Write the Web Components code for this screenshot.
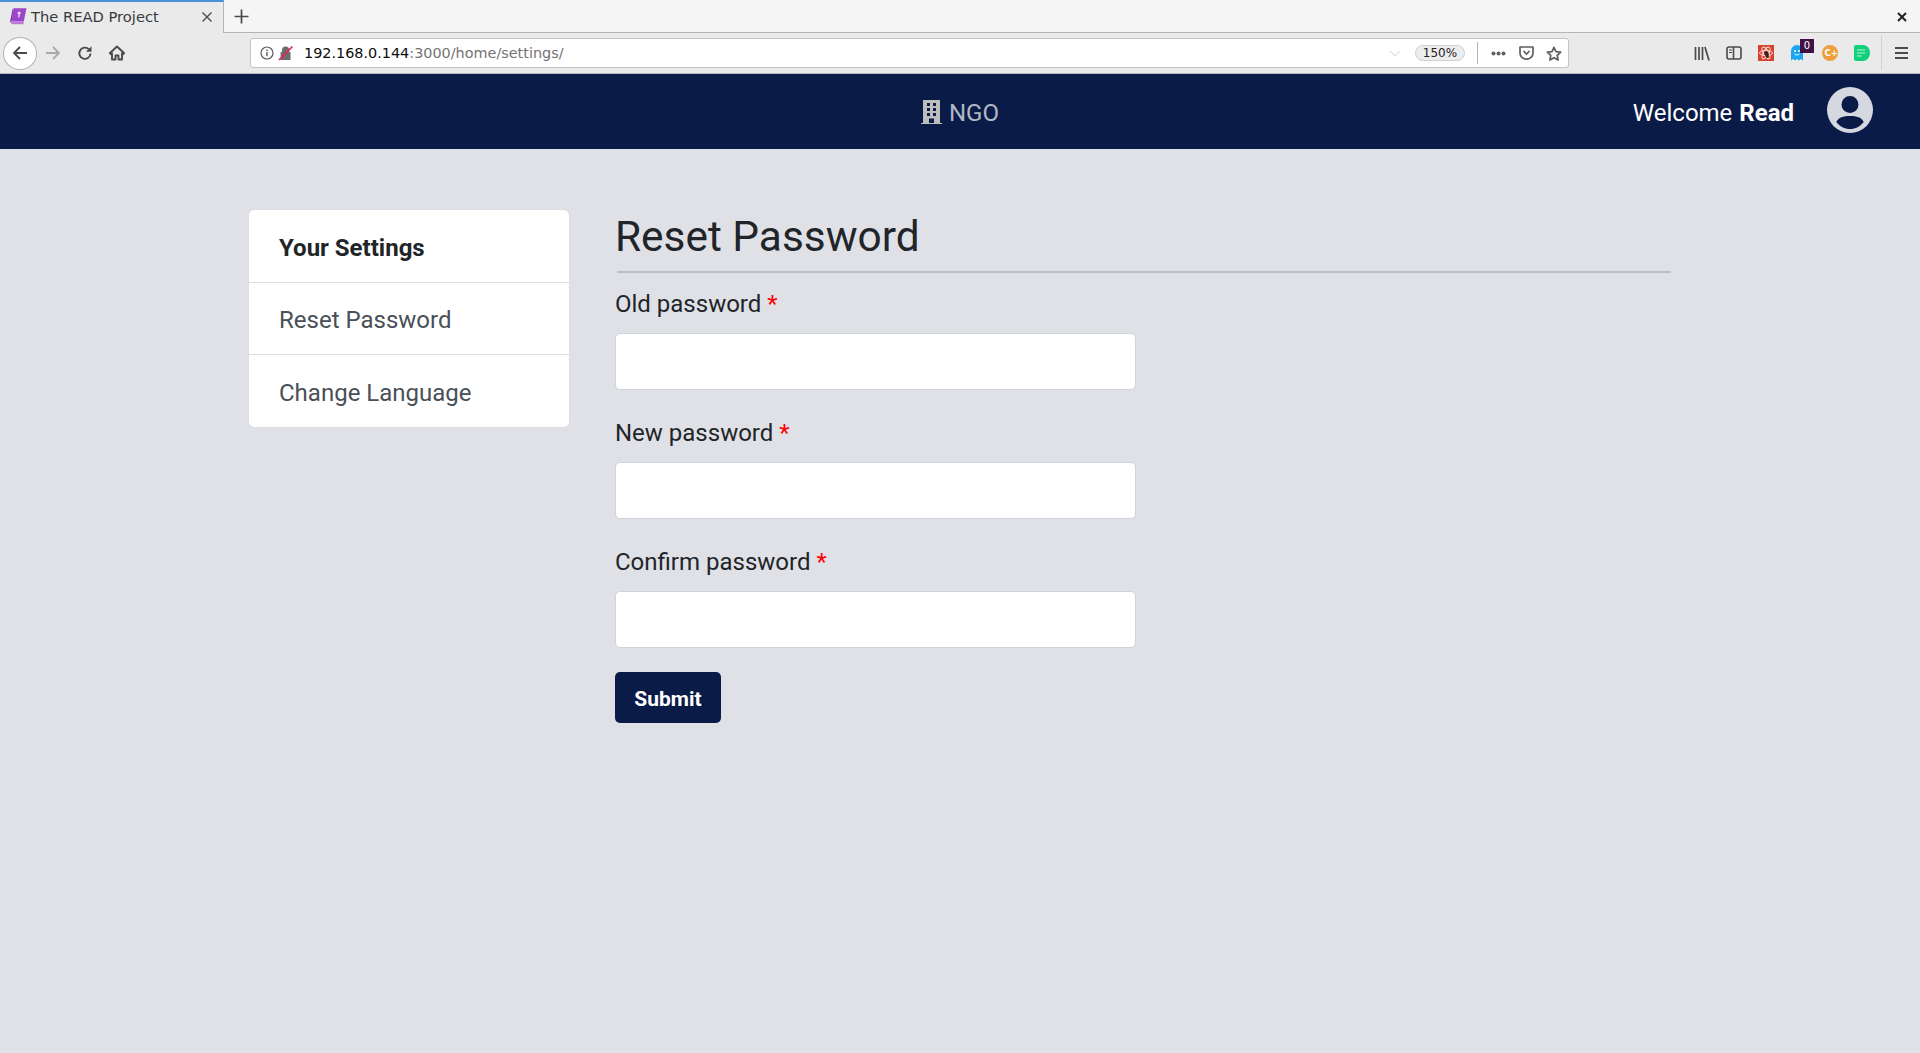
<!DOCTYPE html>
<html>
<head>
<meta charset="utf-8">
<title>The READ Project</title>
<style>
  html, body { margin: 0; height: 100%; overflow: hidden; background: #e0e1e6; }
  body { display: flex; flex-direction: column; font-family: Roboto, "Liberation Sans", sans-serif; }
</style>
</head>
<body>
<browser-chrome tab-title="The READ Project" host-part="192.168.0.144" path-part=":3000/home/settings/" zoom="150%"></browser-chrome>
<app-navbar org="NGO" user="Read"></app-navbar>
<settings-page>
  <settings-menu slot="menu" heading="Your Settings">
    <menu-link>Reset Password</menu-link>
    <menu-link>Change Language</menu-link>
  </settings-menu>
  <reset-form heading="Reset Password">
    <password-field label="Old password"></password-field>
    <password-field label="New password"></password-field>
    <password-field label="Confirm password"></password-field>
  </reset-form>
</settings-page>

<script>
class BrowserChrome extends HTMLElement {
  constructor() {
    super();
    this.attachShadow({ mode: "open" });
    const ico = "#4a4a4f";
    this.shadowRoot.innerHTML = `
      <style>
        :host { display: block; font-family: "DejaVu Sans", sans-serif; color: #38383d; flex: none; }
        svg { display: block; }
        .tabs { height: 32px; background: #f5f5f5; border-bottom: 1px solid #b4b4b4; display: flex; align-items: stretch; }
        .tab { width: 224px; height: 33px; box-sizing: border-box; background: #eaeaea; border-top: 2px solid #4a90d9; border-right: 1px solid #b4b4b4; display: flex; align-items: center; padding: 0 10px 2px 9px; font-size: 14.7px; }
        .tab span { margin-left: 4px; flex: 1; white-space: nowrap; }
        .newtab { width: 34px; display: flex; align-items: center; justify-content: center; }
        .grow { flex: 1; }
        .winclose { width: 36px; padding-top: 2px; display: flex; align-items: center; justify-content: center; }
        .bar { height: 40px; background: #eaeaea; border-bottom: 1px solid #b9b9b9; display: flex; align-items: center; box-sizing: content-box; }
        .nav { width: 250px; flex: none; display: flex; align-items: center; padding-left: 3px; box-sizing: border-box; }
        .back { width: 34px; height: 33px; box-sizing: border-box; border: 1px solid #b1b1b3; border-radius: 50%; background: #fff; display: flex; align-items: center; justify-content: center; }
        .nav .btn { width: 32px; display: flex; justify-content: center; }
        .url { width: 1319px; height: 30px; flex: none; box-sizing: border-box; background: #fff; border: 1px solid #c4c4c4; border-radius: 3px; display: flex; align-items: center; padding-left: 9px; font-size: 14.4px; white-space: nowrap; }
        .url .host { color: #0c0c0d; margin-left: 10px; }
        .url .path { color: #737373; flex: 1; }
        .chev { margin-right: 14px; }
        .pill { width: 50px; height: 16px; box-sizing: border-box; border: 1px solid #cfcfcf; border-radius: 8px; background: #ededed; font-size: 12px; line-height: 14px; text-align: center; color: #222; margin-right: 12px; }
        .sep { width: 1px; height: 22px; background: #b5b5b5; }
        .page-actions { display: flex; align-items: center; margin-left: 6px; }
        .page-actions div { width: 28px; display: flex; justify-content: center; }
        .tools { display: flex; align-items: center; margin-left: 117px; }
        .tool { width: 32px; display: flex; justify-content: center; position: relative; }
        .badge { position: absolute; left: 18px; top: -6px; width: 14px; height: 14px; background: #3f1145; color: #fff; font-size: 10px; line-height: 14px; text-align: center; }
        .tsep { width: 1px; height: 34px; background: #d2d2d2; margin: 0 11px 0 3px; }
      </style>
      <div class="tabs">
        <div class="tab">
          <svg width="18" height="17" viewBox="0 0 17 16"><path d="M4.500.3h12L14 12.500H2.500z" fill="#9b45c9"/><path d="M2.500 12.500H14l-.4 2.800H3.500C1.800 15.300 1.500 13.500 2.500 12.500z" fill="#b878dc"/><path d="M.8 14 3.300 1.500 4.500.3 2.500 12.500z" fill="#7a2ea6"/><circle cx="9.600" cy="4.800" r="1.500" fill="#ecdcf5"/><path d="M8.900 6h1.300l-.3 2.800H8.500z" fill="#ecdcf5"/></svg>
          <span>${this.getAttribute("tab-title")}</span>
          <svg width="12" height="12" viewBox="0 0 12 12"><path d="M1.500 1.500l9 9M10.500 1.500l-9 9" stroke="${ico}" stroke-width="1.400"/></svg>
        </div>
        <div class="newtab"><svg width="15" height="15" viewBox="0 0 15 15"><path d="M7.500 .5v14M.5 7.500h14" stroke="${ico}" stroke-width="1.700"/></svg></div>
        <div class="grow"></div>
        <div class="winclose"><svg width="10" height="10" viewBox="0 0 10 10"><path d="M1 1l8 8M9 1L1 9" stroke="#222" stroke-width="2"/></svg></div>
      </div>
      <div class="bar">
        <div class="nav">
          <div class="back"><svg width="16" height="16" viewBox="0 0 16 16"><path d="M15 8H2M8 2 2 8l6 6" fill="none" stroke="${ico}" stroke-width="1.800"/></svg></div>
          <div class="btn"><svg width="16" height="16" viewBox="0 0 16 16"><path d="M1 8h13M8 2l6 6-6 6" fill="none" stroke="#a9a9ab" stroke-width="1.800"/></svg></div>
          <div class="btn"><svg width="16" height="16" viewBox="0 0 16 16"><path d="M13.500 8.500a5.600 5.600 0 1 1-1.700-4.300" fill="none" stroke="${ico}" stroke-width="1.900"/><path d="M14.500 1.200v5.600H9z" fill="${ico}"/></svg></div>
          <div class="btn"><svg width="16" height="16" viewBox="0 0 16 16"><path d="M8 1.500.8 8.200l1 1L3 8.200V14.500h3.500v-4h3v4H13V8.200l1.200 1 1-1z" fill="none" stroke="${ico}" stroke-width="1.900" stroke-linejoin="round"/></svg></div>
        </div>
        <div class="url">
          <svg width="14" height="14" viewBox="0 0 14 14"><circle cx="7" cy="7" r="6" fill="none" stroke="#5a5a5f" stroke-width="1.200"/><path d="M7 6v4.200M7 3.500v1.400" stroke="#5a5a5f" stroke-width="1.400"/></svg>
          <svg width="16" height="16" viewBox="0 0 16 16" style="margin-left:4px"><path d="M4 7V5a3.600 3.600 0 0 1 7.200 0v2h1.300v8H2.600V7z" fill="#6d6d70"/><path d="M1 15 14.500 1.500" stroke="#e22850" stroke-width="1.700"/></svg>
          <span class="host">${this.getAttribute("host-part")}</span><span class="path">${this.getAttribute("path-part")}</span>
          <svg class="chev" width="12" height="7" viewBox="0 0 12 7"><path d="M1 1l5 5 5-5" fill="none" stroke="#e3e3e3" stroke-width="1.300"/></svg>
          <div class="pill">${this.getAttribute("zoom")}</div>
          <div class="sep"></div>
          <div class="page-actions">
            <div><svg width="15" height="5" viewBox="0 0 15 5"><circle cx="2.500" cy="2.500" r="2" fill="#5f5f62"/><circle cx="7.500" cy="2.500" r="2" fill="#5f5f62"/><circle cx="12.500" cy="2.500" r="2" fill="#5f5f62"/></svg></div>
            <div><svg width="15" height="14" viewBox="0 0 15 14"><path d="M1 1h13v6a6.500 6.200 0 0 1-13 0z" fill="none" stroke="#5f5f62" stroke-width="1.700" stroke-linejoin="round"/><path d="M4.500 5l3 3 3-3" fill="none" stroke="#5f5f62" stroke-width="1.700"/></svg></div>
            <div><svg width="16" height="15" viewBox="0 0 16 15"><path d="M8 1.300l2 4.300 4.700.6-3.500 3.200.9 4.600L8 11.700 3.900 14l.9-4.600L1.300 6.200 6 5.600z" fill="none" stroke="#5f5f62" stroke-width="1.700" stroke-linejoin="round"/></svg></div>
          </div>
        </div>
        <div class="tools">
          <div class="tool"><svg width="16" height="15" viewBox="0 0 16 15"><path d="M1.500 1v13M5 1v13M8.500 1v13M11 1l4 13.500" stroke="${ico}" stroke-width="1.700" fill="none"/></svg></div>
          <div class="tool"><svg width="16" height="14" viewBox="0 0 16 14"><rect x="1" y="1" width="14" height="12" rx="2" fill="none" stroke="${ico}" stroke-width="1.600"/><path d="M7.500 1v12" stroke="${ico}" stroke-width="1.600"/><path d="M3 4h3M3 6.500h3" stroke="${ico}" stroke-width="1.200"/></svg></div>
          <div class="tool"><svg width="16" height="16" viewBox="0 0 16 16"><rect width="16" height="16" fill="#d9412f"/><g fill="none" stroke="#f6d5cf" stroke-width="1"><ellipse cx="8" cy="8" rx="6.500" ry="2.600"/><ellipse cx="8" cy="8" rx="6.500" ry="2.600" transform="rotate(60 8 8)"/><ellipse cx="8" cy="8" rx="6.500" ry="2.600" transform="rotate(120 8 8)"/></g><path d="M6 7l3-1 2 3-1 4-2-.500-1-2.500z" fill="#3a2320"/></svg></div>
          <div class="tool"><svg width="12" height="16" viewBox="0 0 12 16" style="margin-left:-2px"><path d="M0 15.500V6a6 6 0 0 1 12 0v9.500l-2-1.500-2 1.500-2-1.500-2 1.500-2-1.500z" fill="#18a7f0"/><circle cx="4" cy="6" r="1" fill="#fff"/><circle cx="8" cy="6" r="1" fill="#fff"/><path d="M3.500 9c1.500 1.300 3.500 1.300 5 0" stroke="#fff" fill="none"/></svg><div class="badge">0</div></div>
          <div class="tool"><svg width="16" height="16" viewBox="0 0 16 16"><circle cx="8" cy="8" r="8" fill="#ee9f3c"/><text x="2.500" y="11" font-size="8.500" font-weight="700" fill="#fff" font-family="DejaVu Sans">C+</text></svg></div>
          <div class="tool"><svg width="16" height="16" viewBox="0 0 16 16"><path d="M2 0h7a7 8 0 0 1 0 16H2a2 2 0 0 1-2-2V2a2 2 0 0 1 2-2z" fill="#0fd17c"/><path d="M3 5h8M3 8h8M3 11h4.500" stroke="#bff3da" stroke-width="1.200"/></svg></div>
          <div class="tsep"></div>
          <div class="tool" style="width:16px"><svg width="13" height="12" viewBox="0 0 13 12"><path d="M0 1h13M0 6h13M0 11h13" stroke="${ico}" stroke-width="1.800"/></svg></div>
        </div>
      </div>`;
  }
}

class AppNavbar extends HTMLElement {
  constructor() {
    super();
    this.attachShadow({ mode: "open" });
    this.shadowRoot.innerHTML = `
      <style>
        :host { display: grid; grid-template-columns: 1fr auto 1fr; align-items: center; height: 75px; flex: none; background: #0a1b47; padding-right: 47px; padding-left: 47px; font-size: 24px; }
        .org { grid-column: 2; display: flex; align-items: center; color: rgba(255,255,255,.7); gap: 7px; }
        .org span, .user span { padding-top: 2px; }
        .user { grid-column: 3; justify-self: end; display: flex; align-items: center; gap: 33px; color: #fff; word-spacing: 1px; }
        .user svg { margin-top: -3px; }
        b { font-weight: 700; }
        svg { display: block; }
      </style>
      <div class="org">
        <svg width="21" height="24" viewBox="0 0 21 24"><path d="M2 0h17v23h2v1H0v-1h2z" fill="#bdbdbd"/><g fill="#0a1b47"><rect x="6" y="3" width="3" height="3"/><rect x="12" y="3" width="3" height="3"/><rect x="6" y="8" width="3" height="3"/><rect x="12" y="8" width="3" height="3"/><rect x="6" y="13" width="3" height="3"/><rect x="12" y="13" width="3" height="3"/><rect x="8" y="18.500" width="5" height="4.500"/></g></svg>
        <span>${this.getAttribute("org")}</span>
      </div>
      <div class="user">
        <span>Welcome <b>${this.getAttribute("user")}</b></span>
        <svg width="46" height="46" viewBox="0 0 46 46"><circle cx="23" cy="23" r="23" fill="#d5d8e0"/><circle cx="23" cy="17.500" r="8.500" fill="#0a1b47"/><path d="M9.300 35c2-4.500 7-6 13.700-6s11.700 1.500 13.700 6c-3.500 4.500-8.200 7-13.700 7s-10.200-2.500-13.700-7z" fill="#0a1b47"/></svg>
      </div>`;
  }
}

class SettingsPage extends HTMLElement {
  constructor() {
    super();
    this.attachShadow({ mode: "open" });
    this.shadowRoot.innerHTML = `
      <style>
        :host { display: flex; flex: 1; align-items: flex-start; gap: 46px; padding: 61px 0 0 249px; }
        ::slotted([slot="menu"]) { flex: none; }
      </style>
      <slot name="menu"></slot>
      <slot></slot>`;
  }
}

class SettingsMenu extends HTMLElement {
  constructor() {
    super();
    this.attachShadow({ mode: "open" });
    this.shadowRoot.innerHTML = `
      <style>
        :host { display: block; width: 320px; background: #fff; border-radius: 5px; overflow: hidden; box-shadow: 0 0 1px rgba(0,0,0,.12); }
        .head { height: 73px; box-sizing: border-box; padding: 4px 30px 0; display: flex; align-items: center; font-size: 24px; font-weight: 700; color: #212529; border-bottom: 1px solid #dfdfe2; }
      </style>
      <div class="head">${this.getAttribute("heading")}</div>
      <slot></slot>`;
  }
}

class MenuLink extends HTMLElement {
  constructor() {
    super();
    this.attachShadow({ mode: "open" });
    this.shadowRoot.innerHTML = `
      <style>
        :host { display: flex; align-items: center; height: 72px; box-sizing: border-box; padding: 2px 30px 0; font-size: 24px; color: #495057; border-bottom: 1px solid #dfdfe2; }
        :host(:last-child) { border-bottom: 0; padding-top: 4px; }
      </style>
      <slot></slot>`;
  }
}

class ResetForm extends HTMLElement {
  constructor() {
    super();
    this.attachShadow({ mode: "open" });
    this.shadowRoot.innerHTML = `
      <style>
        :host { display: block; width: 1056px; color: #212529; }
        h2 { margin: 0; height: 63px; box-sizing: border-box; font-size: 42.400px; line-height: 54px; font-weight: 400; border-bottom: 0; position: relative; }
        h2::after { content: ""; height: 2px; background: #bcbcbc; position: absolute; left: 2px; right: 0; bottom: 0; }
        .fields { padding-top: 13px; }
        button { display: block; width: 106px; height: 51px; margin-top: 24px; padding: 2px 0 0; border: 0; border-radius: 5px; background: #0a1b47; color: #fff; font: 700 21px Roboto, sans-serif; }
      </style>
      <h2>${this.getAttribute("heading")}</h2>
      <div class="fields"><slot></slot></div>
      <button type="button">Submit</button>`;
  }
}

class PasswordField extends HTMLElement {
  constructor() {
    super();
    this.attachShadow({ mode: "open" });
    this.shadowRoot.innerHTML = `
      <style>
        :host { display: block; width: 521px; margin-bottom: 25px; }
        :host(:last-child) { margin-bottom: 0; }
        label { display: block; font-size: 24px; line-height: 36px; margin-bottom: 11px; color: #212529; }
        i { font-style: normal; color: #f00; }
        input { display: block; width: 100%; height: 57px; box-sizing: border-box; border: 1px solid #ced4da; border-radius: 5px; background: #fff; outline: none; }
      </style>
      <label>${this.getAttribute("label")} <i>*</i></label>
      <input type="password">`;
  }
}

customElements.define("browser-chrome", BrowserChrome);
customElements.define("app-navbar", AppNavbar);
customElements.define("settings-page", SettingsPage);
customElements.define("settings-menu", SettingsMenu);
customElements.define("menu-link", MenuLink);
customElements.define("reset-form", ResetForm);
customElements.define("password-field", PasswordField);
</script>
</body>
</html>
